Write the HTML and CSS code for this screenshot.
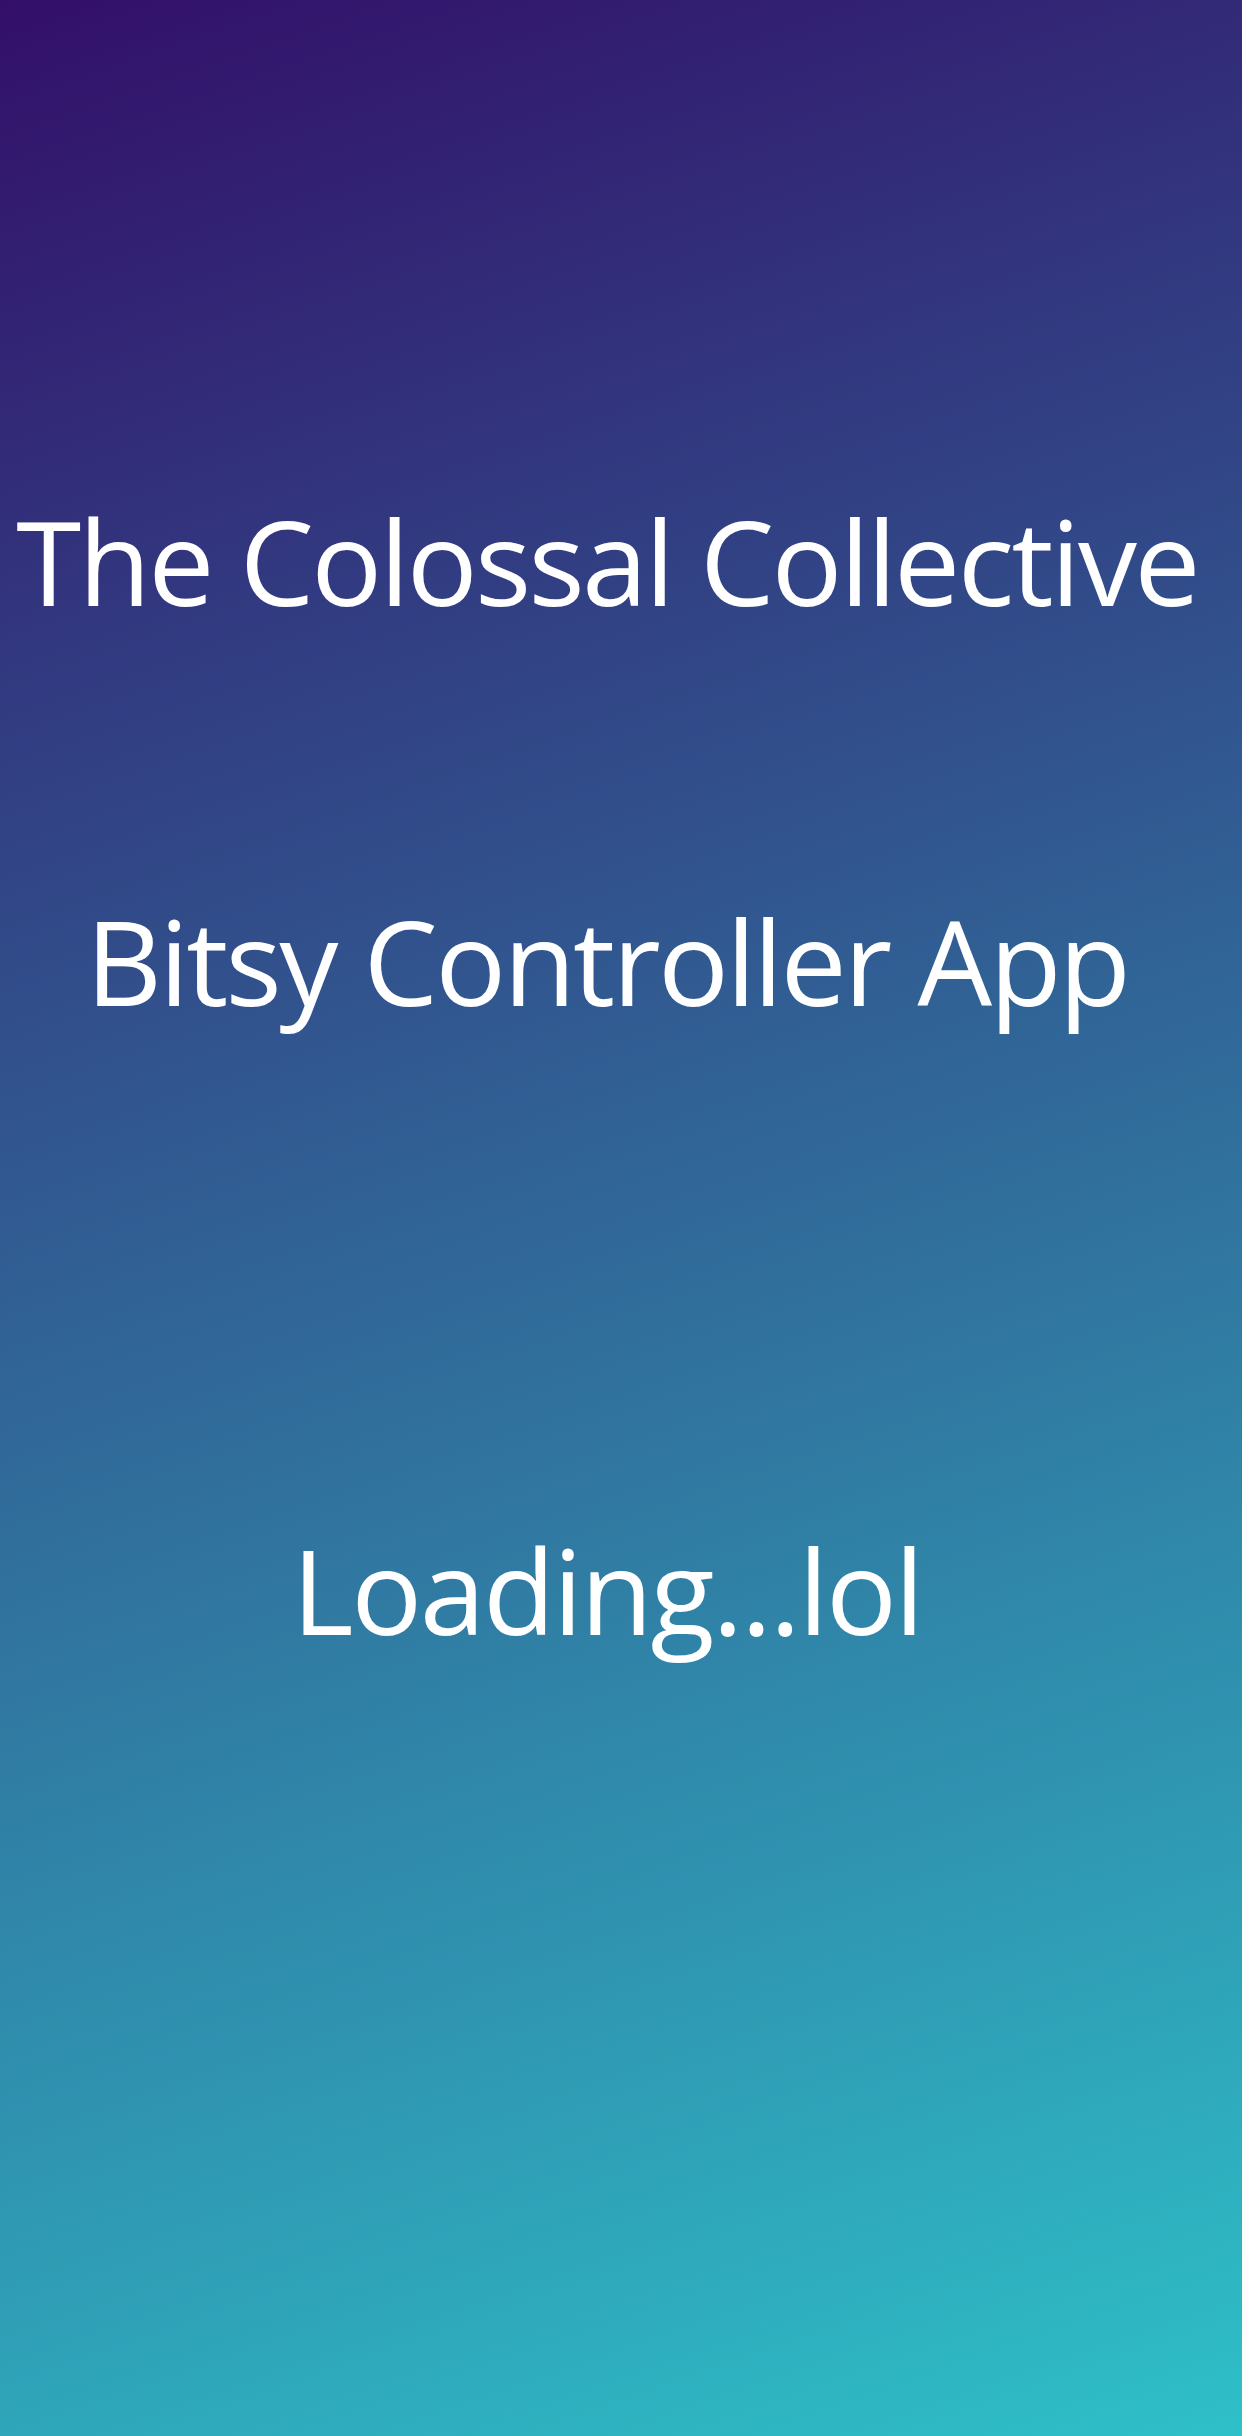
FILE: index.html
```html
<!DOCTYPE html>
<html lang="en">
<head>
<meta charset="utf-8">
<title>Bitsy Controller App</title>
<link rel="stylesheet" href="styles.css">
</head>
<body>
<main class="splash">
  <h1 class="title">The Colossal Collective</h1>
  <h2 class="subtitle">Bitsy Controller App</h2>
  <p class="loading">Loading...lol</p>
</main>
</body>
</html>
```
FILE: styles.css
```css
html, body {
  margin: 0;
  padding: 0;
}
body {
  width: 1242px;
  height: 2436px;
  overflow: hidden;
  background: linear-gradient(161deg, #330f69 0%, #2ec0c8 100%);
  font-family: "Open Sans", "Noto Sans", sans-serif;
  color: #ffffff;
}
.splash {
  display: flex;
  flex-direction: column;
  align-items: center;
  padding: 502px 28px 0 0;
}
.title, .subtitle, .loading {
  margin: 0;
  font-weight: 400;
  font-size: 118px;
  line-height: 118px;
  letter-spacing: -2.7px;
  white-space: nowrap;
}
.subtitle {
  margin-top: 282px;
}
.loading {
  margin-top: 511px;
  letter-spacing: -2.3px;
}
```
